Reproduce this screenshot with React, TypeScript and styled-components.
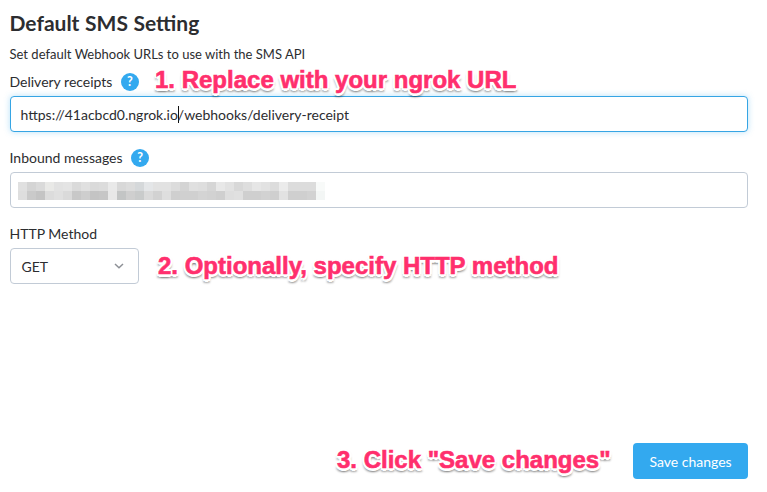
import React from "react";
import styled, { createGlobalStyle } from "styled-components";

const GlobalStyle = createGlobalStyle`
  * { box-sizing: border-box; }
  body { margin: 0; background: #fff; }
`;

const Page = styled.main`
  position: relative;
  width: 767px;
  height: 492px;
  padding: 9px 19px 13px 10px;
  display: flex;
  flex-direction: column;
  background: #fff;
  color: #2c2d30;
  font-family: Lato, "Liberation Sans", sans-serif;
  font-size: 14px;
  overflow: hidden;
`;

const Title = styled.h1`
  margin: 0 0 0 -0.5px;
  font-size: 21px;
  line-height: 28px;
  font-weight: 700;
  word-spacing: 0.5px;
  white-space: nowrap;
`;

const Subtitle = styled.p`
  margin: 7px 0 0 -0.5px;
  font-size: 13px;
  line-height: 20px;
  letter-spacing: 0.01px;
  white-space: nowrap;
`;

const Field = styled.div<{ $gap: number }>`
  display: flex;
  flex-direction: column;
  margin-top: ${(p) => p.$gap}px;
`;

const LabelRow = styled.div`
  position: relative;
  display: flex;
  align-items: center;
  gap: 8.5px;
  height: 20px;
  margin: 0 0 4px -0.5px;
`;

const Label = styled.label`
  line-height: 20px;
  white-space: nowrap;
`;

const Help = styled.span`
  display: flex;
  align-items: center;
  justify-content: center;
  width: 18px;
  height: 18px;
  border-radius: 50%;
  background: #33a9ef;
  color: #fff;
  font-size: 12.5px;
  font-weight: 700;
  line-height: 18px;
`;

const Box = styled.div<{ $focused?: boolean }>`
  display: flex;
  align-items: center;
  height: 36px;
  padding: 0 9.5px;
  border: 1px solid ${(p) => (p.$focused ? "#36a5e4" : "#c2cbd6")};
  border-radius: 4px;
  background: #fff;
  box-shadow: ${(p) => (p.$focused ? "0 0 6px rgba(51, 169, 239, 0.35)" : "none")};
  white-space: nowrap;
`;

const Caret = styled.span`
  width: 1px;
  height: 17px;
  margin-right: -1px;
  background: #111;
`;

const Mosaic = styled.div`
  display: grid;
  grid-template-columns: repeat(34, 9.03px);
  grid-auto-rows: 9px;
  margin: 2px 0 0 -2.5px;
`;

const Cell = styled.span<{ $tone: string }>`
  background: ${(p) => p.$tone};
`;

const Select = styled(Box)`
  width: 129px;
  padding: 0 14px 0 10.5px;
  justify-content: space-between;
`;

const Footer = styled.footer`
  display: flex;
  justify-content: flex-end;
  margin-top: auto;
`;

const Button = styled.button`
  width: 115px;
  height: 36px;
  padding: 1px 0 0;
  border: 0;
  border-radius: 4px;
  background: #33a9ef;
  color: #fff;
  font: 400 14px/35px Lato, sans-serif;
`;

const Note = styled.span<{ $x: number; $y: number }>`
  position: absolute;
  left: ${(p) => p.$x}px;
  top: ${(p) => p.$y}px;
  z-index: 2;
  font: 700 24px/28px "Liberation Sans", Arial, sans-serif;
  color: #ff2f6d;
  white-space: nowrap;
  -webkit-text-stroke: 0.6px #ff2f6d;
  text-shadow:
    2.5px 0 0 #fff, -2.5px 0 0 #fff, 0 2.5px 0 #fff, 0 -2.5px 0 #fff,
    1.8px 1.8px 0 #fff, -1.8px 1.8px 0 #fff, 1.8px -1.8px 0 #fff, -1.8px -1.8px 0 #fff,
    1.5px 4px 2px rgba(0, 0, 0, 0.28), -1.5px 4px 2px rgba(0, 0, 0, 0.28), 0 2px 4px rgba(0, 0, 0, 0.2);
`;

const upper = ["#e0e0e0", "#d4d4d4", "#dadada", "#e9e9e7", "#e2e2e2", "#e4e4e4", "#dadada", "#e0e0e0", "#dadada", "#dcdcdc", "#e9e9e9", "#d8d8d8", "#dcdcdc", "#d5d8da", "#e4e6e8", "#e2e2e2", "#e2e2e2", "#dcdcdc", "#d4d4d4", "#e0e0e0", "#dedede", "#d6d6d6", "#e8e8e8", "#e2e2e2", "#d8d8d8", "#dedede", "#e6e6e6", "#e2e2e2", "#dcdcdc", "#ebebeb", "#dcdcdc", "#dcdcdc", "#dcdcdc", "#f8faf9"];
const lower = ["#dedede", "#cacaca", "#c4c4c4", "#dcdcdc", "#e0e0e0", "#dadada", "#c8c8c8", "#cecece", "#c4c4c4", "#c6c6c6", "#e8e8e8", "#c3c5c5", "#cfcfcf", "#c9cbcb", "#dadada", "#d2d2d2", "#dedede", "#cfcfcf", "#d0d0d0", "#d0d0d0", "#d4d4d4", "#d2d2d2", "#cfcfcf", "#dedede", "#e0e0e0", "#cfcfcf", "#cfcfcf", "#d2d2d2", "#cfcfcf", "#e2e2e2", "#cfcfcf", "#cfcfcf", "#d2d2d2", "#f3f6f5"];

export default function App() {
  return (
    <>
      <GlobalStyle />
      <Page>
        <Title>Default SMS Setting</Title>
        <Subtitle>Set default Webhook URLs to use with the SMS API</Subtitle>
        <Field $gap={8}>
          <LabelRow>
            <Label>Delivery receipts</Label>
            <Help>?</Help>
            <Note $x={145.5} $y={-6}>1. Replace with your ngrok URL</Note>
          </LabelRow>
          <Box $focused>
            <span>https://41acbcd0.ngrok.io</span>
            <Caret />
            <span>/webhooks/delivery-receipt</span>
          </Box>
        </Field>
        <Field $gap={16}>
          <LabelRow>
            <Label>Inbound messages</Label>
            <Help>?</Help>
          </LabelRow>
          <Box>
            <Mosaic>
              {[...upper, ...lower].map((tone, i) => (
                <Cell key={i} $tone={tone} />
              ))}
            </Mosaic>
          </Box>
        </Field>
        <Field $gap={16}>
          <LabelRow>
            <Label>HTTP Method</Label>
          </LabelRow>
          <Select>
            <span>GET</span>
            <svg width="10" height="6" viewBox="0 0 10 6" fill="none" stroke="#8d9096" strokeWidth="1.5">
              <path d="M1 1l4 3.7L9 1" />
            </svg>
          </Select>
        </Field>
        <Note $x={158} $y={252}>2. Optionally, specify HTTP method</Note>
        <Footer>
          <Button>Save changes</Button>
        </Footer>
        <Note $x={337} $y={446}>3. Click "Save changes"</Note>
      </Page>
    </>
  );
}
